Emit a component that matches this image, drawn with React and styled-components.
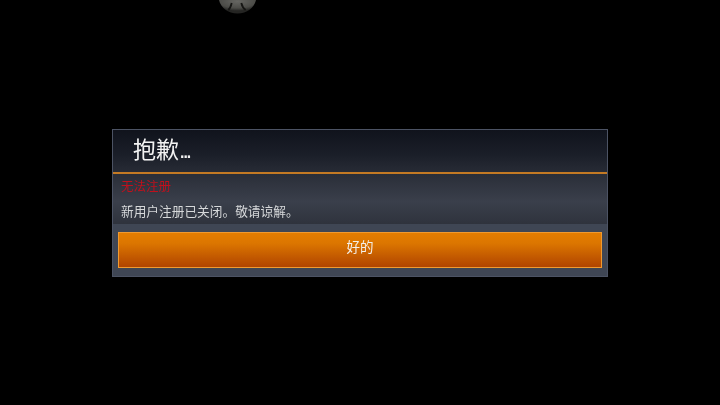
import React from "react";
import styled, { createGlobalStyle } from "styled-components";

const GlobalStyle = createGlobalStyle`
  html, body {
    margin: 0;
    padding: 0;
    background: #000;
  }
  body {
    font-family: "Liberation Sans", "Noto Sans CJK SC", sans-serif;
  }
`;

const Screen = styled.div`
  position: relative;
  width: 720px;
  height: 405px;
  box-sizing: border-box;
  padding-top: 129px;
  overflow: hidden;
  background: #000;
  display: flex;
  align-items: flex-start;
  justify-content: center;
  filter: blur(0.3px);
`;

const Avatar = styled.svg`
  position: absolute;
  left: 218px;
  top: 0;
  width: 39px;
  height: 14px;
`;

const Dialog = styled.div`
  width: 494px;
  display: flex;
  flex-direction: column;
  border: 1px solid #4c5364;
  background: #3f4654;
`;

const Header = styled.div`
  height: 36px;
  display: flex;
  align-items: center;
  padding: 0 0 6px 20px;
  background: linear-gradient(to bottom, #10131c 0%, #1b1f29 60%, #272b35 100%);
  border-bottom: 2px solid #c47a24;
  color: #f2f2f2;
  font-size: 23px;
`;

const Dots = styled.span`
  letter-spacing: -3px;
`;

const Body = styled.div`
  height: 50px;
  padding: 0 8px;
  display: flex;
  flex-direction: column;
  background: linear-gradient(to bottom, #2a2e38 0%, #3a3f4b 55%, #2f333d 100%);
`;

const ErrorTitle = styled.div`
  margin-top: 5px;
  height: 16px;
  line-height: 16px;
  font-size: 12.500px;
  color: #c0101c;
`;

const Message = styled.div`
  margin-top: 9px;
  height: 16px;
  line-height: 16px;
  font-size: 12.700px;
  color: #d6d8da;
`;

const Footer = styled.div`
  display: flex;
  padding: 8px 5px;
  background: #3f4654;
`;

const OkButton = styled.button`
  flex: 1;
  height: 36px;
  margin: 0;
  padding: 0 0 9px;
  border: 1px solid #f09a30;
  background: linear-gradient(to bottom, #e47d00 0%, #dc7600 30%, #b04400 100%);
  color: #f4f0ea;
  font-family: inherit;
  font-size: 13.500px;
`;

export default function App() {
  return (
    <Screen>
      <GlobalStyle />
      <Avatar viewBox="0 0 39 14">
        <defs>
          <radialGradient id="face" cx="50%" cy="10%" r="70%">
            <stop offset="0%" stopColor="#666662" />
            <stop offset="70%" stopColor="#4c4c48" />
            <stop offset="100%" stopColor="#252523" />
          </radialGradient>
        </defs>
        <path d="M1 0 H38 C36 8 29 13.500 19.500 13.500 C10 13.500 3 8 1 0 Z" fill="url(#face)" />
        <path d="M13.700 3 C13 6 12 8.500 10.300 10" fill="none" stroke="#161614" strokeWidth="1.800" />
        <path d="M23.300 3 C24 6 25.500 8.500 27.700 10" fill="none" stroke="#161614" strokeWidth="1.800" />
      </Avatar>
      <Dialog>
        <Header>
          <span>
            抱歉<Dots>...</Dots>
          </span>
        </Header>
        <Body>
          <ErrorTitle>无法注册</ErrorTitle>
          <Message>新用户注册已关闭。敬请谅解。</Message>
        </Body>
        <Footer>
          <OkButton>好的</OkButton>
        </Footer>
      </Dialog>
    </Screen>
  );
}
